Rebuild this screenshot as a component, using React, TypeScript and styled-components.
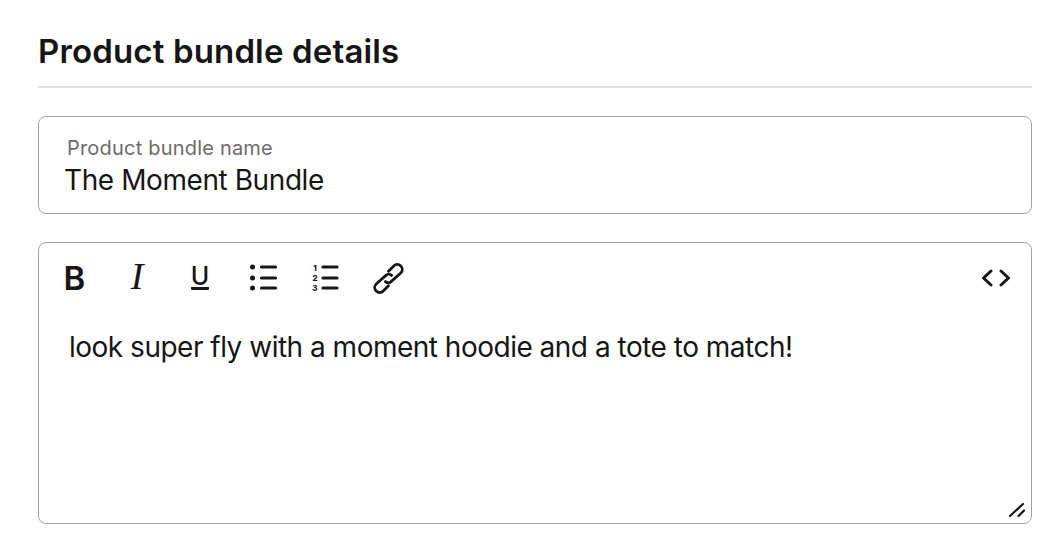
import React from "react";
import styled, { createGlobalStyle } from "styled-components";

const GlobalStyle = createGlobalStyle`
  html, body {
    margin: 0;
    padding: 0;
    background: #fff;
  }
  body {
    font-family: Inter, "Liberation Sans", sans-serif;
    color: #161614;
  }
`;

const Page = styled.main`
  width: 994px;
  margin-left: 38px;
  padding-top: 31px;
`;

const Heading = styled.h2`
  margin: 0;
  height: 57px;
  box-sizing: border-box;
  border-bottom: 2px solid #dfdfdf;
  font-size: 33px;
  line-height: 40px;
  font-weight: 600;
  letter-spacing: 0.15px;
`;

const Field = styled.label`
  display: block;
  height: 98px;
  box-sizing: border-box;
  margin-top: 28px;
  padding: 19px 25px 0;
  border: 1px solid #a3a3a1;
  border-radius: 8px;
`;

const FieldLabel = styled.span`
  display: block;
  padding-left: 3px;
  font-size: 20px;
  line-height: 24px;
  letter-spacing: 0.2px;
  color: #6b6b68;
`;

const FieldValue = styled.span`
  display: block;
  margin-top: 4px;
  font-size: 28px;
  line-height: 32px;
  letter-spacing: -0.42px;
`;

const Editor = styled.section`
  position: relative;
  height: 282px;
  box-sizing: border-box;
  margin-top: 28px;
  border: 1px solid #a3a3a1;
  border-radius: 8px;
`;

const Toolbar = styled.div`
  display: flex;
  align-items: center;
  height: 70px;
  padding: 0 4px;
`;

const ToolButton = styled.button<{ $serif?: boolean; $bold?: boolean }>`
  display: flex;
  align-items: center;
  justify-content: center;
  width: 62.8px;
  height: 40px;
  padding: 0 0 ${(p) => (p.$serif ? "4px" : "0")};
  border: 0;
  background: none;
  color: #161614;
  font-family: ${(p) => (p.$serif ? '"Liberation Serif", serif' : "Inter, sans-serif")};
  font-style: ${(p) => (p.$serif ? "italic" : "normal")};
  font-weight: ${(p) => (p.$serif ? 400 : p.$bold ? 600 : 500)};
  font-size: ${(p) => (p.$bold ? "33px" : p.$serif ? "38px" : "25px")};
`;

const UnderlinedGlyph = styled.span`
  display: block;
  margin-bottom: 2px;
  line-height: 22px;
  border-bottom: 3px solid #161614;
  border-radius: 1px;
`;

const Spacer = styled.div`
  flex: 1;
`;

const EditorBody = styled.p`
  margin: 0;
  padding: 16px 30px;
  font-size: 28px;
  line-height: 36px;
  letter-spacing: -0.5px;
`;

const ResizeHandle = styled.svg`
  position: absolute;
  right: 6px;
  bottom: 6px;
  width: 16px;
  height: 14px;
`;

const strokeIcon = {
  fill: "none",
  stroke: "#161614",
  strokeWidth: 3.2,
  strokeLinecap: "round" as const,
  strokeLinejoin: "round" as const,
};

const BulletIcon = () => (
  <svg width="30" height="28" viewBox="0 0 30 28" {...strokeIcon}>
    <path d="M13.500 3h14M13.500 14h14M13.500 24h14" />
    <circle cx="4.500" cy="3" r="2.500" fill="#161614" stroke="none" />
    <circle cx="4.500" cy="14" r="2.500" fill="#161614" stroke="none" />
    <circle cx="4.500" cy="24" r="2.500" fill="#161614" stroke="none" />
  </svg>
);

const NumberedIcon = () => (
  <svg width="30" height="32" viewBox="0 0 30 32" {...strokeIcon}>
    <path d="M12 5h14M12 16h14M12 26h14" />
    <g fill="#161614" stroke="none" fontFamily="Inter, sans-serif" fontSize="8" fontWeight="800" textAnchor="middle">
      <text x="4" y="8.500">1</text>
      <text x="4" y="18.500">2</text>
      <text x="4" y="28.500">3</text>
    </g>
  </svg>
);

const LinkIcon = () => (
  <svg width="31" height="31" viewBox="0 0 30 30" {...strokeIcon} strokeWidth={2.7}>
    <path d="M12 18q2.700 2.400 5.500 0L26.900 9.600a4.800 4.800 0 0 0-6.800-6.800L15 8" />
    <path d="M18 12q-2.700-2.400-5.500 0L3.100 20.400a4.800 4.800 0 0 0 6.800 6.800L15 22" />
  </svg>
);

const CodeIcon = () => (
  <svg width="30" height="18" viewBox="0 0 30 18" {...strokeIcon} strokeWidth={3}>
    <path d="M10 2 2.500 9 10 16M20 2l7.500 7L20 16" />
  </svg>
);

export default function App() {
  return (
    <>
      <GlobalStyle />
      <Page>
        <Heading>Product bundle details</Heading>
        <Field>
          <FieldLabel>Product bundle name</FieldLabel>
          <FieldValue>The Moment Bundle</FieldValue>
        </Field>
        <Editor>
          <Toolbar>
            <ToolButton $bold>B</ToolButton>
            <ToolButton $serif>I</ToolButton>
            <ToolButton>
              <UnderlinedGlyph>U</UnderlinedGlyph>
            </ToolButton>
            <ToolButton>
              <BulletIcon />
            </ToolButton>
            <ToolButton>
              <NumberedIcon />
            </ToolButton>
            <ToolButton>
              <LinkIcon />
            </ToolButton>
            <Spacer />
            <ToolButton>
              <CodeIcon />
            </ToolButton>
          </Toolbar>
          <EditorBody>look super fly with a moment hoodie and a tote to match!</EditorBody>
          <ResizeHandle viewBox="0 0 16 14" {...strokeIcon} strokeWidth={2.2}>
            <path d="M1 13 14 1M9.500 13 15 7.500" />
          </ResizeHandle>
        </Editor>
      </Page>
    </>
  );
}
